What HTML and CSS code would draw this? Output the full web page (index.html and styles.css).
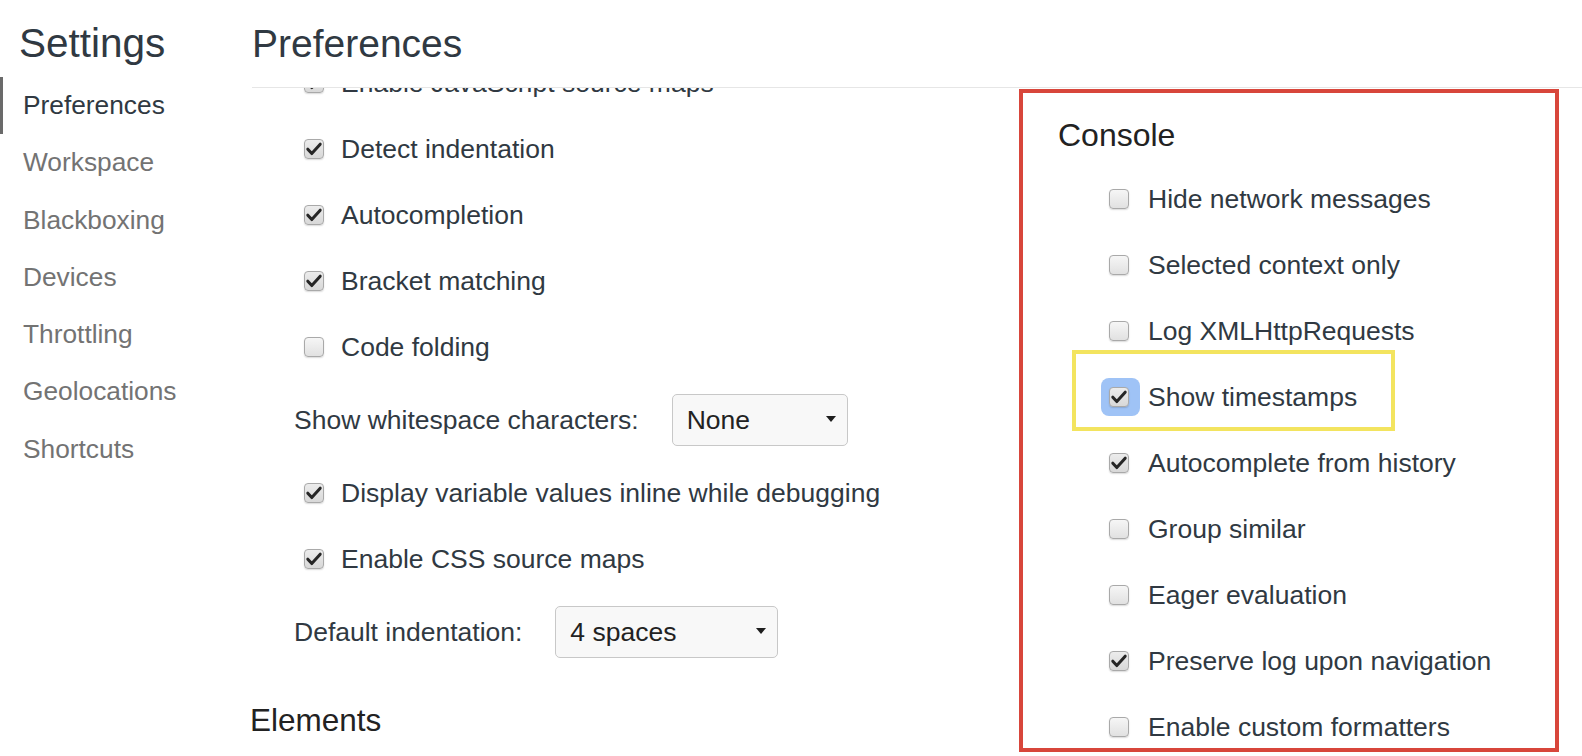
FILE: index.html
```html
<!DOCTYPE html>
<html lang="en">
<head>
<meta charset="utf-8">
<title>Settings</title>
<link rel="stylesheet" href="styles.css">
</head>
<body>
<div class="app">
  <aside class="sidebar">
    <h1 class="title">Settings</h1>
    <nav class="nav">
      <div class="nav-item active">Preferences</div>
      <div class="nav-item">Workspace</div>
      <div class="nav-item">Blackboxing</div>
      <div class="nav-item">Devices</div>
      <div class="nav-item">Throttling</div>
      <div class="nav-item">Geolocations</div>
      <div class="nav-item">Shortcuts</div>
    </nav>
  </aside>
  <main class="main">
    <header class="main-header"><h1 class="title">Preferences</h1></header>
    <div class="scroller">
      <div class="col col-left">
        <div class="row"><span class="cb checked"><svg viewBox="0 0 18 18"><path d="M2.8 9.2 L6.8 13.6 L15.2 4.2"/></svg></span><span>Enable JavaScript source maps</span></div>
        <div class="row"><span class="cb checked"><svg viewBox="0 0 18 18"><path d="M2.8 9.2 L6.8 13.6 L15.2 4.2"/></svg></span><span>Detect indentation</span></div>
        <div class="row"><span class="cb checked"><svg viewBox="0 0 18 18"><path d="M2.8 9.2 L6.8 13.6 L15.2 4.2"/></svg></span><span>Autocompletion</span></div>
        <div class="row"><span class="cb checked"><svg viewBox="0 0 18 18"><path d="M2.8 9.2 L6.8 13.6 L15.2 4.2"/></svg></span><span>Bracket matching</span></div>
        <div class="row"><span class="cb"></span><span>Code folding</span></div>
        <div class="select-row">
          <span>Show whitespace characters:</span>
          <div class="select select-none"><span>None</span><svg class="arrow" viewBox="0 0 10 6"><polygon points="0,0 10,0 5,6"/></svg></div>
        </div>
        <div class="row"><span class="cb checked"><svg viewBox="0 0 18 18"><path d="M2.8 9.2 L6.8 13.6 L15.2 4.2"/></svg></span><span>Display variable values inline while debugging</span></div>
        <div class="row"><span class="cb checked"><svg viewBox="0 0 18 18"><path d="M2.8 9.2 L6.8 13.6 L15.2 4.2"/></svg></span><span>Enable CSS source maps</span></div>
        <div class="select-row">
          <span>Default indentation:</span>
          <div class="select select-indent"><span>4 spaces</span><svg class="arrow" viewBox="0 0 10 6"><polygon points="0,0 10,0 5,6"/></svg></div>
        </div>
        <h2 class="section-title">Elements</h2>
      </div>
      <div class="col col-right">
        <h2 class="section-title">Console</h2>
        <div class="row"><span class="cb"></span><span>Hide network messages</span></div>
        <div class="row"><span class="cb"></span><span>Selected context only</span></div>
        <div class="row"><span class="cb"></span><span>Log XMLHttpRequests</span></div>
        <div class="row"><span class="cb checked focus"><svg viewBox="0 0 18 18"><path d="M2.8 9.2 L6.8 13.6 L15.2 4.2"/></svg></span><span>Show timestamps</span></div>
        <div class="row"><span class="cb checked"><svg viewBox="0 0 18 18"><path d="M2.8 9.2 L6.8 13.6 L15.2 4.2"/></svg></span><span>Autocomplete from history</span></div>
        <div class="row"><span class="cb"></span><span>Group similar</span></div>
        <div class="row"><span class="cb"></span><span>Eager evaluation</span></div>
        <div class="row"><span class="cb checked"><svg viewBox="0 0 18 18"><path d="M2.8 9.2 L6.8 13.6 L15.2 4.2"/></svg></span><span>Preserve log upon navigation</span></div>
        <div class="row"><span class="cb"></span><span>Enable custom formatters</span></div>
      </div>
    </div>
  </main>
  <div class="annot annot-red"></div>
  <div class="annot annot-yellow"></div>
</div>
</body>
</html>
```

FILE: styles.css
```css
html, body {
  margin: 0;
  padding: 0;
  height: 100%;
}

body {
  background: #ffffff;
  font-family: "Liberation Sans", Arial, Helvetica, sans-serif;
  color: #303942;
  overflow: hidden;
}

.app {
  position: relative;
  display: flex;
  height: 756px;
}

.sidebar {
  width: 250px;
  flex: none;
  padding-top: 20px;
  box-sizing: border-box;
}

.title {
  margin: 0;
  font-size: 39px;
  font-weight: 400;
  line-height: 48px;
  color: #303942;
}

.sidebar .title {
  padding-left: 19px;
  font-size: 40.5px;
  line-height: 46px;
}

.nav {
  margin-top: 11px;
}

.nav-item {
  height: 57.3px;
  line-height: 57px;
  padding-left: 23px;
  font-size: 26.3px;
  color: #737373;
}

.nav-item.active {
  color: #303942;
  box-shadow: inset 3px 0 0 #6a6a6a;
}

.main {
  flex: 1;
  min-width: 0;
  display: flex;
  flex-direction: column;
}

.main-header {
  padding-top: 20px;
  padding-bottom: 19px;
  margin-left: 2px;
  border-bottom: 1px solid #e6e6e6;
}

.scroller {
  flex: 1;
  overflow: hidden;
  display: grid;
  grid-template-columns: 807px 1fr;
  align-items: start;
}

.col-left {
  margin-top: -38px;
}

.col-right {
  padding-top: 27px;
}

.section-title {
  margin: 0;
  font-size: 31.5px;
  font-weight: 400;
  line-height: 40px;
  color: #222222;
}

.col-right .section-title {
  font-size: 32px;
  margin-left: 1px;
  margin-bottom: 11px;
}

.col-left .section-title {
  margin-top: 28px;
}

.row {
  display: flex;
  align-items: center;
  gap: 17px;
  height: 66px;
  padding-left: 54px;
  font-size: 26.5px;
  color: #303942;
}

.col-right .row {
  padding-left: 52px;
  gap: 19px;
}

.select-row {
  display: flex;
  align-items: center;
  gap: 33px;
  height: 80px;
  padding-left: 44px;
  font-size: 26.5px;
  color: #303942;
}

.select {
  display: flex;
  align-items: center;
  justify-content: space-between;
  height: 52px;
  box-sizing: border-box;
  padding: 0 11px 0 14px;
  border: 1px solid #c8c8c8;
  border-radius: 5px;
  background: #f8f8f8;
  color: #222222;
}

.select-none {
  width: 176px;
}

.select-indent {
  width: 223px;
}

.arrow {
  width: 10px;
  height: 6px;
  margin-top: -3px;
  fill: #1e1e1e;
}

.cb {
  position: relative;
  flex: none;
  width: 20px;
  height: 20px;
  box-sizing: border-box;
  border: 1px solid #a9a9a9;
  border-radius: 4px;
  background: linear-gradient(#f6f6f6, #e1e1e1);
  box-shadow: 0 1px 1.5px rgba(0, 0, 0, 0.15);
}

.cb.checked {
  background: linear-gradient(#ececec, #d8d8d8);
}

.cb svg {
  display: block;
  width: 18px;
  height: 18px;
  fill: none;
  stroke: #262626;
  stroke-width: 3;
  stroke-linecap: round;
  stroke-linejoin: round;
}

.cb.focus::before {
  content: "";
  position: absolute;
  left: -9px;
  top: -10px;
  right: -12px;
  bottom: -10px;
  border-radius: 8px;
  background: #9fc3f6;
  z-index: -1;
}

.annot {
  position: absolute;
  box-sizing: border-box;
  pointer-events: none;
}

.annot-red {
  left: 1019px;
  top: 89px;
  width: 540px;
  height: 663px;
  border: 4px solid #d8463b;
}

.annot-yellow {
  left: 1072px;
  top: 350px;
  width: 323px;
  height: 81px;
  border: 4px solid #f3e45f;
}
```
